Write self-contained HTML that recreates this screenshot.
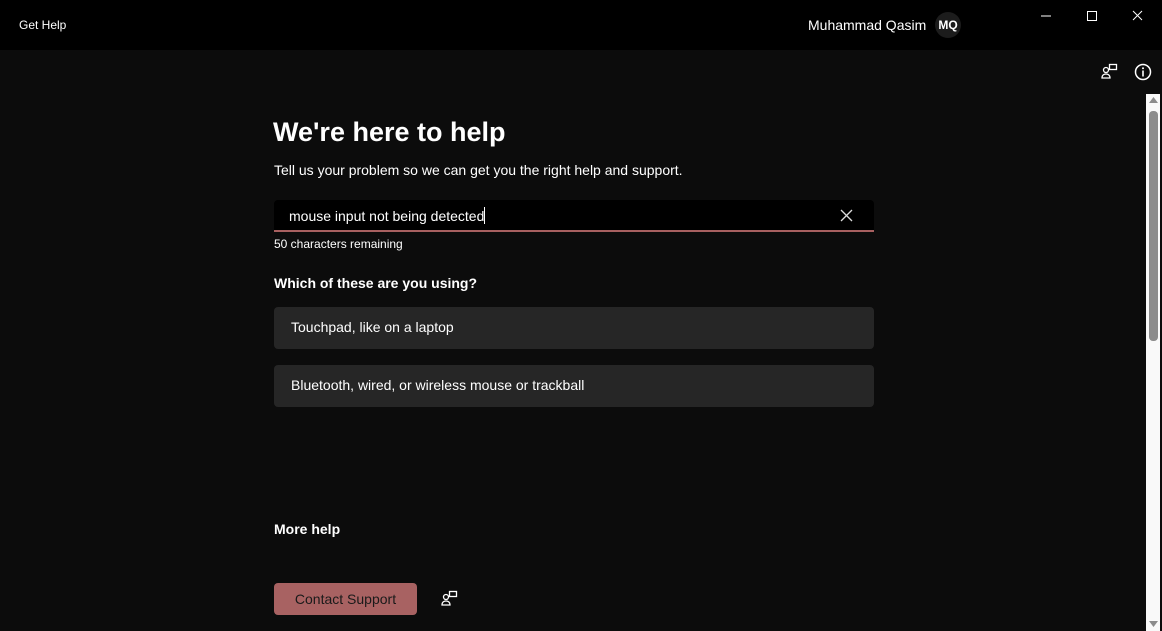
<!DOCTYPE html>
<html><head><meta charset="utf-8"><style>
*{margin:0;padding:0;box-sizing:border-box}
body{width:1162px;height:631px;background:#0c0c0c;font-family:"Liberation Sans",sans-serif;color:#fff;position:relative;overflow:hidden}
.top{position:absolute;left:0;top:0;width:1162px;height:50px;background:#000}
.abs{position:absolute}
.opt{position:absolute;left:274px;width:600px;height:42px;background:#262626;border-radius:4px;font-size:14px;padding-left:17px;line-height:40px}
</style></head><body>
<div class="top"></div>
<div class="abs" style="left:19px;top:18px;font-size:12px">Get Help</div>
<div class="abs" style="left:808px;top:17px;font-size:14px">Muhammad Qasim</div>
<div class="abs" style="left:935px;top:12px;width:26px;height:26px;border-radius:50%;background:#1c1c1c;font-size:12px;font-weight:bold;text-align:center;line-height:26px">MQ</div>
<svg class="abs" style="left:1030px;top:8px" width="120" height="20" stroke="#fff" stroke-width="1" fill="none">
<line x1="11" y1="8" x2="21" y2="8"/>
<rect x="57.5" y="3.5" width="9" height="9"/>
<path d="M103 3l9 9M112 3l-9 9"/>
</svg>
<svg class="abs" style="left:1101px;top:63px" width="18" height="18" stroke="#fff" stroke-width="1.3" fill="none">
<circle cx="5" cy="7" r="2.5"/><path d="M1 15c0-3 2-4 4-4s4 1 4 4z"/><rect x="8.5" y="1.5" width="7" height="5"/></svg>
<svg class="abs" style="left:1134px;top:63px" width="18" height="18"><circle cx="9" cy="9" r="7.5" stroke="#fff" stroke-width="1.5" fill="none"/><rect x="8.2" y="7.5" width="1.6" height="6" fill="#fff"/><circle cx="9" cy="5.3" r="1" fill="#fff"/></svg>
<div class="abs" style="left:1146px;top:94px;width:14px;height:537px;background:#f9f9f9"></div>
<div class="abs" style="left:1149px;top:111px;width:9px;height:230px;background:#8c8c8c;border-radius:4px"></div>
<svg class="abs" style="left:1148px;top:96px" width="11" height="8"><path d="M1 7L5.5 1 10 7z" fill="#8c8c8c"/></svg>
<svg class="abs" style="left:1148px;top:620px" width="11" height="8"><path d="M1 1L5.5 7 10 1z" fill="#8c8c8c"/></svg>
<div class="abs" style="left:273px;top:117px;font-size:27px;font-weight:bold">We're here to help</div>
<div class="abs" style="left:274px;top:162px;font-size:14px">Tell us your problem so we can get you the right help and support.</div>
<div class="abs" style="left:274px;top:200px;width:600px;height:32px;background:#000;border-radius:4px 4px 0 0;border-bottom:2px solid #a86060"></div>
<div class="abs" style="left:289px;top:207px;font-size:14px">mouse input not being detected<span style="display:inline-block;width:1px;height:17px;background:#fff;vertical-align:-3px"></span></div>
<svg class="abs" style="left:840px;top:209px" width="13" height="13" stroke="#ddd" stroke-width="1.3"><path d="M1 1l11 11M12 1L1 12"/></svg>
<div class="abs" style="left:274px;top:237px;font-size:12px">50 characters remaining</div>
<div class="abs" style="left:274px;top:275px;font-size:14px;font-weight:bold">Which of these are you using?</div>
<div class="opt" style="top:307px">Touchpad, like on a laptop</div>
<div class="opt" style="top:365px">Bluetooth, wired, or wireless mouse or trackball</div>
<div class="abs" style="left:274px;top:521px;font-size:14px;font-weight:bold">More help</div>
<div class="abs" style="left:274px;top:583px;width:143px;height:32px;background:#a86262;border-radius:4px;color:#1a1a1a;font-size:14px;text-align:center;line-height:32px">Contact Support</div>
<svg class="abs" style="left:441px;top:590px" width="18" height="18" stroke="#fff" stroke-width="1.3" fill="none">
<circle cx="5" cy="7" r="2.5"/><path d="M1 15c0-3 2-4 4-4s4 1 4 4z"/><rect x="8.5" y="1.5" width="7" height="5"/></svg>
</body></html>
